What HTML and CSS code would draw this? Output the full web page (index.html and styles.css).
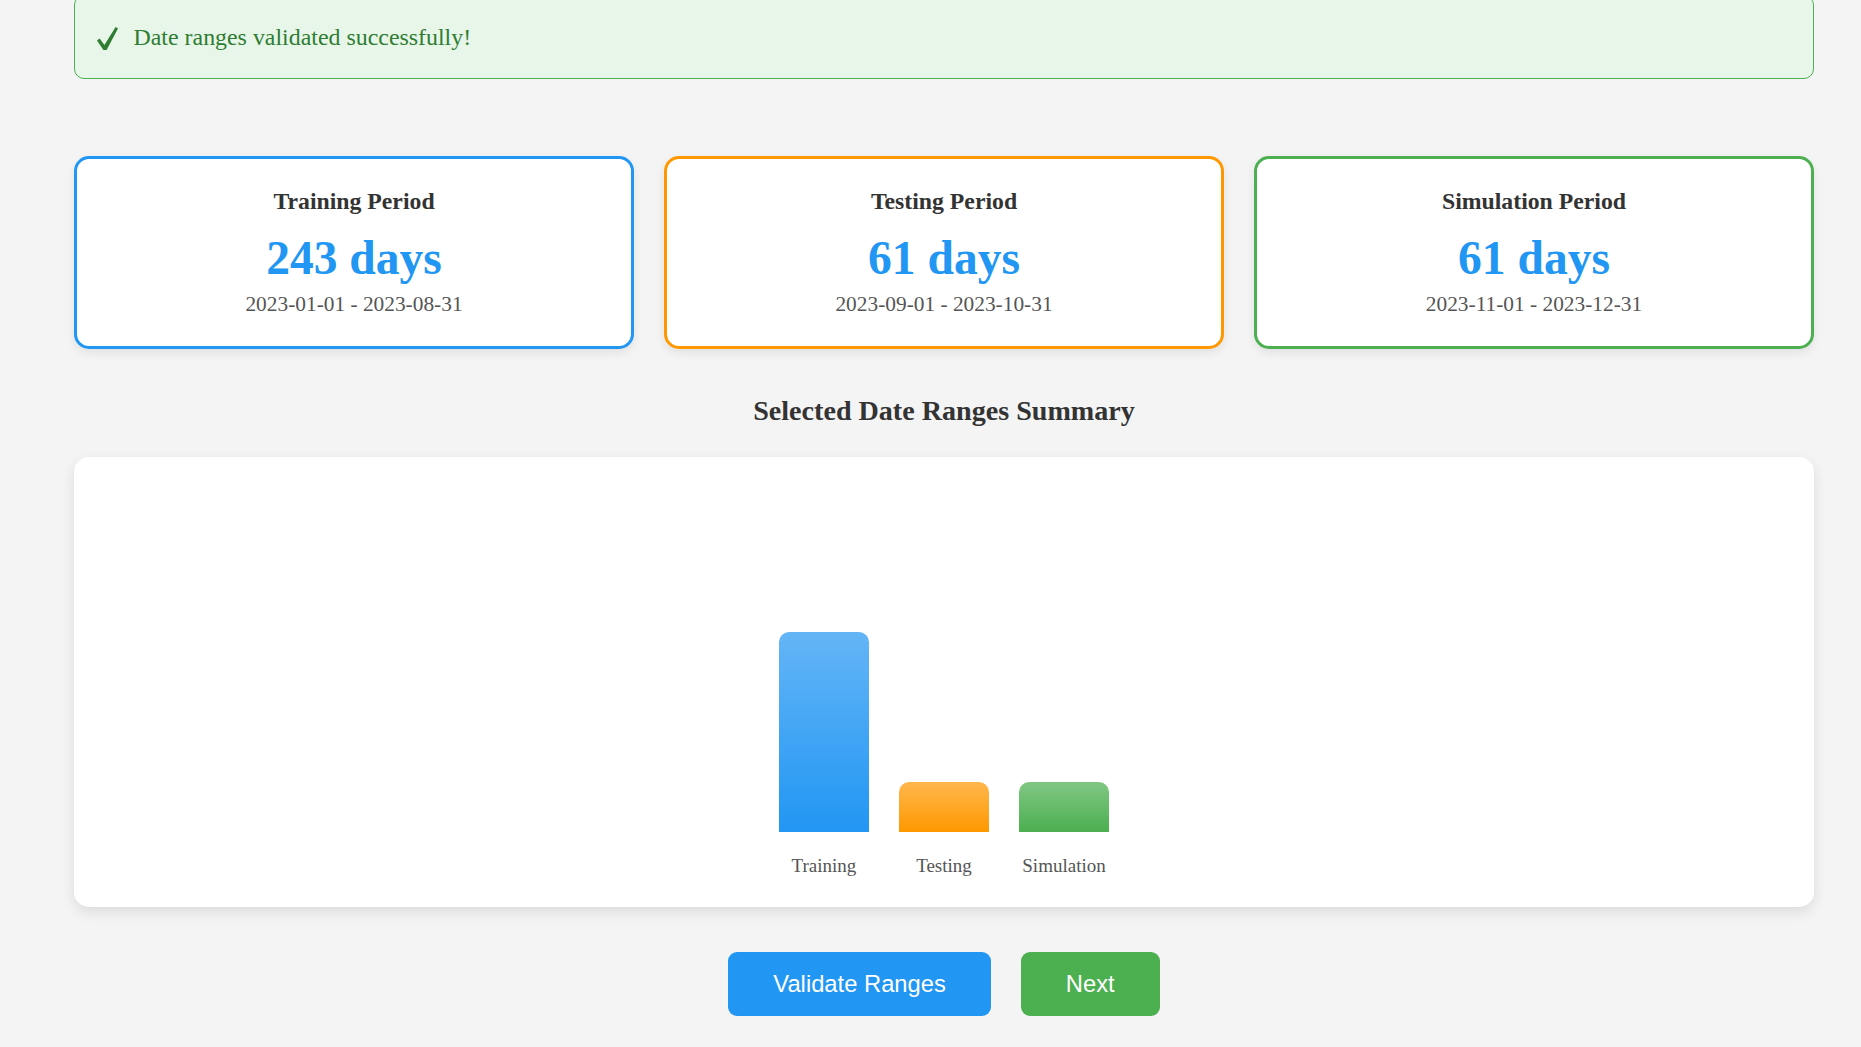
FILE: index.html
```html
<!DOCTYPE html>
<html lang="en">
<head>
<meta charset="utf-8">
<title>Date Range Selection</title>
<link rel="stylesheet" href="styles.css">
</head>
<body>
<main class="page">
  <div class="alert">
    <svg class="alert-icon" width="21" height="23" viewBox="0 0 21 23" aria-hidden="true">
      <path d="M0 13.4 L2.6 11.4 L7.4 17.9 L18.6 0 L21 1.4 L9.6 23 L6.4 23 Z" fill="#2e7d32"/>
    </svg>
    <span>Date ranges validated successfully!</span>
  </div>

  <section class="cards">
    <div class="card card-training">
      <h3 class="card-title">Training Period</h3>
      <div class="card-days">243 days</div>
      <div class="card-range">2023-01-01 - 2023-08-31</div>
    </div>
    <div class="card card-testing">
      <h3 class="card-title">Testing Period</h3>
      <div class="card-days">61 days</div>
      <div class="card-range">2023-09-01 - 2023-10-31</div>
    </div>
    <div class="card card-simulation">
      <h3 class="card-title">Simulation Period</h3>
      <div class="card-days">61 days</div>
      <div class="card-range">2023-11-01 - 2023-12-31</div>
    </div>
  </section>

  <h2 class="summary-title">Selected Date Ranges Summary</h2>

  <section class="chart">
    <div class="bar-col">
      <div class="bar bar-training" style="height: 199.5px"></div>
      <div class="bar-label">Training</div>
    </div>
    <div class="bar-col">
      <div class="bar bar-testing" style="height: 50px"></div>
      <div class="bar-label">Testing</div>
    </div>
    <div class="bar-col">
      <div class="bar bar-simulation" style="height: 50px"></div>
      <div class="bar-label">Simulation</div>
    </div>
  </section>

  <div class="actions">
    <button class="btn btn-validate">Validate Ranges</button>
    <button class="btn btn-next">Next</button>
  </div>
</main>
</body>
</html>
```

FILE: styles.css
```css
* {
  box-sizing: border-box;
}

html, body {
  margin: 0;
  padding: 0;
}

body {
  background: #f4f4f4;
  font-family: "Liberation Serif", "Times New Roman", serif;
  color: #333;
  overflow: hidden;
}

.page {
  margin: 0 47px 0 74px;
  padding-bottom: 40px;
}

/* Alert */
.alert {
  margin-top: -5px;
  height: 84px;
  display: flex;
  align-items: center;
  padding: 0 22px;
  background: #e8f5e9;
  border: 1px solid #4caf50;
  border-radius: 10px;
  color: #2e7d32;
  font-size: 23.9px;
  line-height: 28px;
}

.alert-icon {
  flex: none;
  margin-right: 15.5px;
  position: relative;
  top: 1px;
}

/* Cards */
.cards {
  margin-top: 76.5px;
  display: grid;
  grid-template-columns: repeat(3, 1fr);
  gap: 30px;
}

.card {
  background: #fff;
  border: 3px solid #2196f3;
  border-radius: 15px;
  padding: 28px 20px 29px;
  text-align: center;
  box-shadow: 0 4px 10px rgba(0, 0, 0, 0.08);
}

.card-training { border-color: #2196f3; }
.card-testing { border-color: #ff9800; }
.card-simulation { border-color: #4caf50; }

.card-title {
  margin: 0 0 16.5px;
  font-size: 23.75px;
  line-height: 28px;
  font-weight: bold;
  color: #333;
}

.card-days {
  font-size: 47.5px;
  line-height: 55px;
  font-weight: bold;
  color: #2196f3;
  margin-bottom: 5.5px;
}

.card-range {
  font-size: 21.375px;
  line-height: 25px;
  color: #555;
}

/* Summary */
.summary-title {
  margin: 45.3px 0 0;
  text-align: center;
  font-size: 28.1px;
  line-height: 33px;
  font-weight: bold;
  color: #333;
}

.chart {
  margin-top: 30.7px;
  height: 450px;
  background: #fff;
  border-radius: 15px;
  box-shadow: 0 5px 14px rgba(0, 0, 0, 0.1);
  display: flex;
  justify-content: center;
  align-items: flex-end;
  gap: 30px;
  padding-bottom: 30px;
}

.bar-col {
  width: 90px;
  display: flex;
  flex-direction: column;
  align-items: center;
}

.bar {
  width: 90px;
  border-radius: 10px 10px 0 0;
}

.bar-training { background: linear-gradient(to bottom, #64b5f6, #2196f3); }
.bar-testing { background: linear-gradient(to bottom, #ffb74d, #ff9800); }
.bar-simulation { background: linear-gradient(to bottom, #81c784, #4caf50); }

.bar-label {
  margin-top: 23.6px;
  font-size: 19px;
  line-height: 22px;
  color: #555;
  white-space: nowrap;
}

/* Actions */
.actions {
  margin-top: 44.3px;
  display: flex;
  justify-content: center;
  gap: 30px;
}

.btn {
  border: none;
  border-radius: 9px;
  padding: 20px 45px;
  font-family: "Liberation Sans", Arial, sans-serif;
  font-size: 23.75px;
  line-height: 24px;
  color: #fff;
  cursor: pointer;
}

.btn-validate { background: #2196f3; }
.btn-next { background: #4caf50; }
```
